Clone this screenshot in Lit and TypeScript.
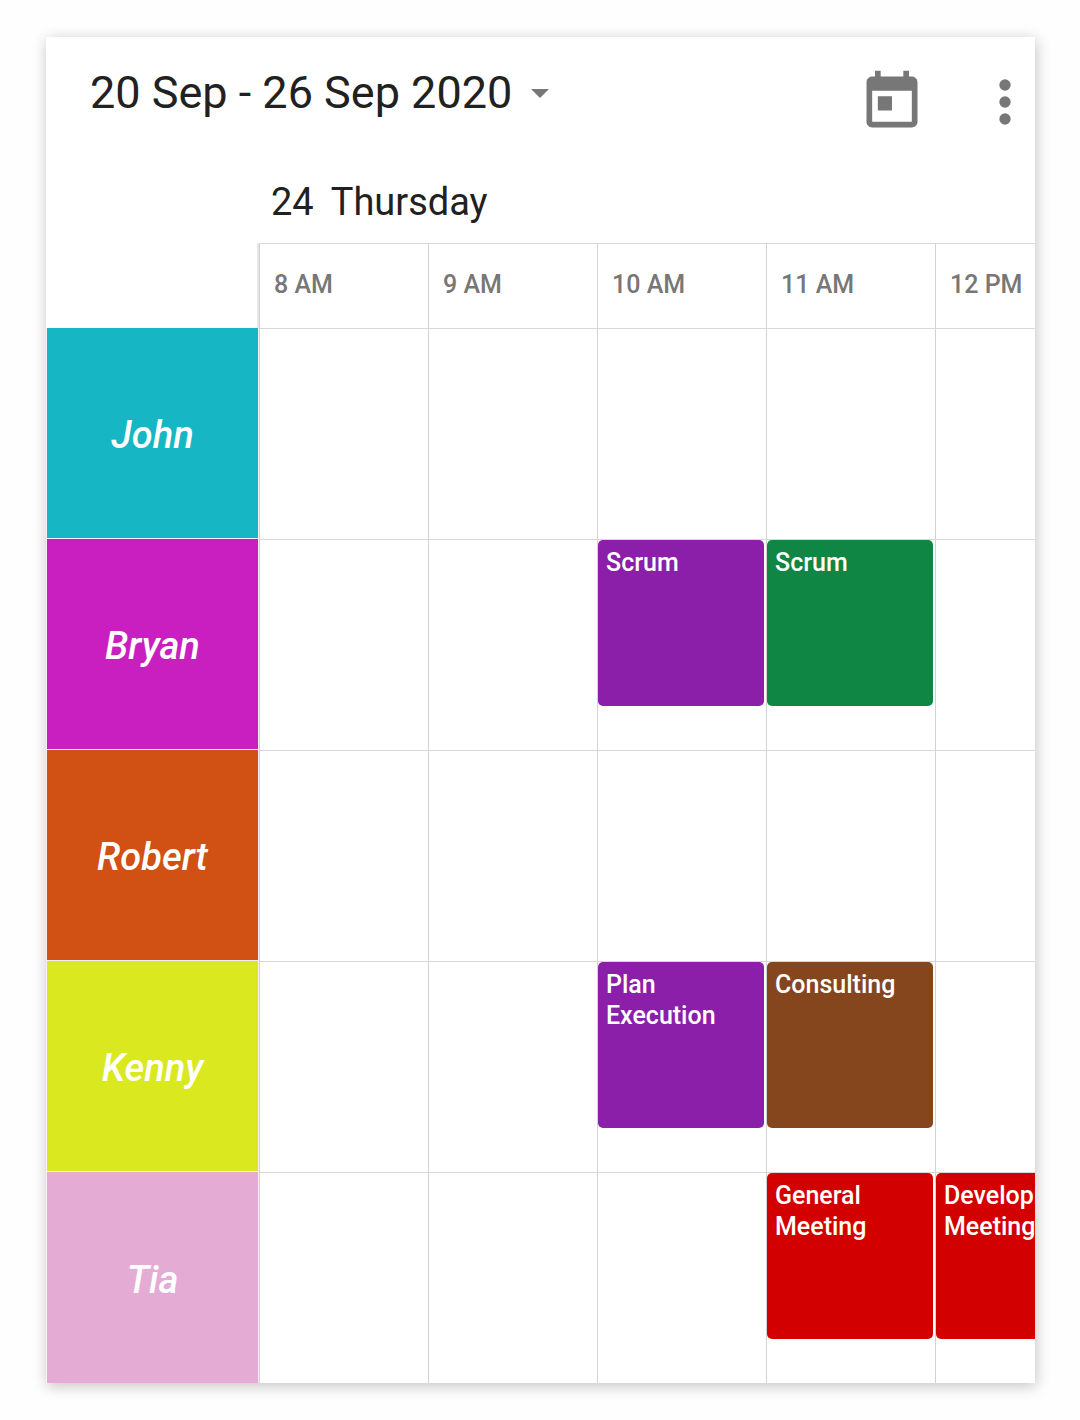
import { LitElement, html, css, nothing } from "lit";
import { customElement, property } from "lit/decorators.js";

interface Appointment {
  hour: string;
  title: string;
  tone: string;
}

interface Resource {
  name: string;
  tone: string;
  appointments: Appointment[];
}

const HOURS = ["8 AM", "9 AM", "10 AM", "11 AM", "12 PM"];

const RESOURCES: Resource[] = [
  { name: "John", tone: "teal", appointments: [] },
  {
    name: "Bryan",
    tone: "magenta",
    appointments: [
      { hour: "10 AM", title: "Scrum", tone: "purple" },
      { hour: "11 AM", title: "Scrum", tone: "green" },
    ],
  },
  { name: "Robert", tone: "orange", appointments: [] },
  {
    name: "Kenny",
    tone: "lime",
    appointments: [
      { hour: "10 AM", title: "Plan Execution", tone: "purple" },
      { hour: "11 AM", title: "Consulting", tone: "brown" },
    ],
  },
  {
    name: "Tia",
    tone: "pink",
    appointments: [
      { hour: "11 AM", title: "General Meeting", tone: "red" },
      { hour: "12 PM", title: "Development Meeting", tone: "red" },
    ],
  },
];

@customElement("schedule-header")
export class ScheduleHeader extends LitElement {
  @property() range = "";

  static styles = css`
    :host {
      display: block;
    }
    .bar {
      display: flex;
      align-items: flex-start;
      padding: 29px 13px 13px 44px;
    }
    button {
      border: 0;
      padding: 0;
      background: none;
      font: inherit;
      cursor: pointer;
    }
    svg {
      display: block;
      fill: #777;
    }
    .range {
      display: flex;
      align-items: center;
      gap: 19px;
      font-size: 45px;
      line-height: 54px;
      color: #212121;
      white-space: nowrap;
    }
    .actions {
      display: flex;
      gap: 62px;
      margin-left: auto;
      padding-top: 2px;
    }
  `;

  render() {
    return html`
      <header class="bar">
        <button class="range" type="button" aria-haspopup="true">
          <span>${this.range}</span>
          <svg width="18" height="9" viewBox="0 0 18 9" aria-hidden="true">
            <path d="M0 0h18L9 9z" />
          </svg>
        </button>
        <div class="actions">
          <button type="button" aria-label="Today">
            <svg width="68" height="68" viewBox="0 0 24 24" aria-hidden="true">
              <path
                d="M19 3h-1V1h-2v2H8V1H6v2H5c-1.11 0-1.99.9-1.99 2L3 19c0 1.1.89 2 2 2h14c1.1 0 2-.9 2-2V5c0-1.1-.9-2-2-2zm0 16H5V8h14v11zM7 10h5v5H7z"
              />
            </svg>
          </button>
          <button type="button" aria-label="More options">
            <svg width="34" height="68" viewBox="6 0 12 24" aria-hidden="true">
              <circle cx="12" cy="6" r="2" />
              <circle cx="12" cy="12" r="2" />
              <circle cx="12" cy="18" r="2" />
            </svg>
          </button>
        </div>
      </header>
    `;
  }
}

@customElement("schedule-timeline")
export class ScheduleTimeline extends LitElement {
  static styles = css`
    :host {
      display: block;
      overflow: hidden;
    }
    table {
      width: 100%;
      min-width: 1058px;
      table-layout: fixed;
      border-collapse: separate;
      border-spacing: 0;
    }
    .name-col {
      width: 213px;
    }
    .hour-col {
      width: 169px;
    }
    th,
    td {
      box-sizing: border-box;
      padding: 0;
      font-weight: 400;
      text-align: left;
    }
    .day {
      height: 94px;
      padding: 0 12px 19px;
      vertical-align: bottom;
      font-size: 38px;
      line-height: 44px;
      color: #212121;
    }
    .day-label {
      display: flex;
      gap: 17px;
    }
    .corner {
      border-right: 2px solid #e6e6e6;
    }
    .hour,
    .slot {
      border-top: 1px solid #d8d8d8;
      border-left: 1px solid #d2d2d2;
    }
    .hour {
      height: 85px;
      padding: 0 14px 2px;
      font-size: 25px;
      line-height: 30px;
      font-weight: 500;
      color: #777;
      vertical-align: middle;
    }
    .slot {
      height: 211px;
      vertical-align: top;
    }
    .name {
      border: 1px solid #f4f0f4;
      border-top: 0;
      padding-top: 4px;
      text-align: center;
      vertical-align: middle;
      font-size: 38px;
      line-height: 44px;
      font-weight: 500;
      font-style: italic;
      color: #fff;
      background-clip: padding-box;
    }
    tr:last-child .name {
      border-bottom: 0;
    }
    .event {
      display: block;
      box-sizing: border-box;
      width: calc(100% - 2px);
      height: 166px;
      border: 0;
      border-radius: 5px;
      padding: 7px 8px;
      font: inherit;
      font-weight: 500;
      font-size: 25px;
      line-height: 31px;
      text-align: left;
      color: #fff;
      cursor: pointer;
    }
    .event-title {
      display: block;
      height: 152px;
    }
    .teal {
      background-color: #17b6c5;
    }
    .magenta {
      background-color: #c91fc0;
    }
    .orange {
      background-color: #d15013;
    }
    .lime {
      background-color: #dae820;
    }
    .pink {
      background-color: #e4acd5;
    }
    .purple {
      background-color: #8b1fa9;
    }
    .green {
      background-color: #0f8644;
    }
    .brown {
      background-color: #85461e;
    }
    .red {
      background-color: #d20100;
    }
  `;

  private renderEvent(item?: Appointment) {
    return item
      ? html`<button type="button" class="event ${item.tone}"><span class="event-title">${item.title}</span></button>`
      : nothing;
  }

  render() {
    return html`
      <table>
        <colgroup>
          <col class="name-col" />
          ${HOURS.map(() => html`<col class="hour-col" />`)}
        </colgroup>
        <thead>
          <tr>
            <td></td>
            <th class="day" scope="colgroup" colspan=${HOURS.length}>
              <span class="day-label"><span>24</span><span>Thursday</span></span>
            </th>
          </tr>
          <tr>
            <td class="corner"></td>
            ${HOURS.map((hour) => html`<th class="hour" scope="col">${hour}</th>`)}
          </tr>
        </thead>
        <tbody>
          ${RESOURCES.map(
            (resource) => html`
              <tr>
                <th class="name ${resource.tone}" scope="row">${resource.name}</th>
                ${HOURS.map(
                  (hour) => html`<td class="slot">
                    ${this.renderEvent(resource.appointments.find((a) => a.hour === hour))}
                  </td>`
                )}
              </tr>
            `
          )}
        </tbody>
      </table>
    `;
  }
}

@customElement("app-root")
export class AppRoot extends LitElement {
  static styles = css`
    :host {
      display: block;
      box-sizing: border-box;
      min-height: 100vh;
      padding: 37px 45px 37px 46px;
      background: #fefefe;
      font-family: Roboto, "Liberation Sans", sans-serif;
    }
    .card {
      background: #fff;
      box-shadow: 1px 3px 14px rgba(0, 0, 0, 0.24);
    }
  `;

  render() {
    return html`
      <main class="card">
        <schedule-header range="20 Sep - 26 Sep 2020"></schedule-header>
        <schedule-timeline></schedule-timeline>
      </main>
    `;
  }
}
